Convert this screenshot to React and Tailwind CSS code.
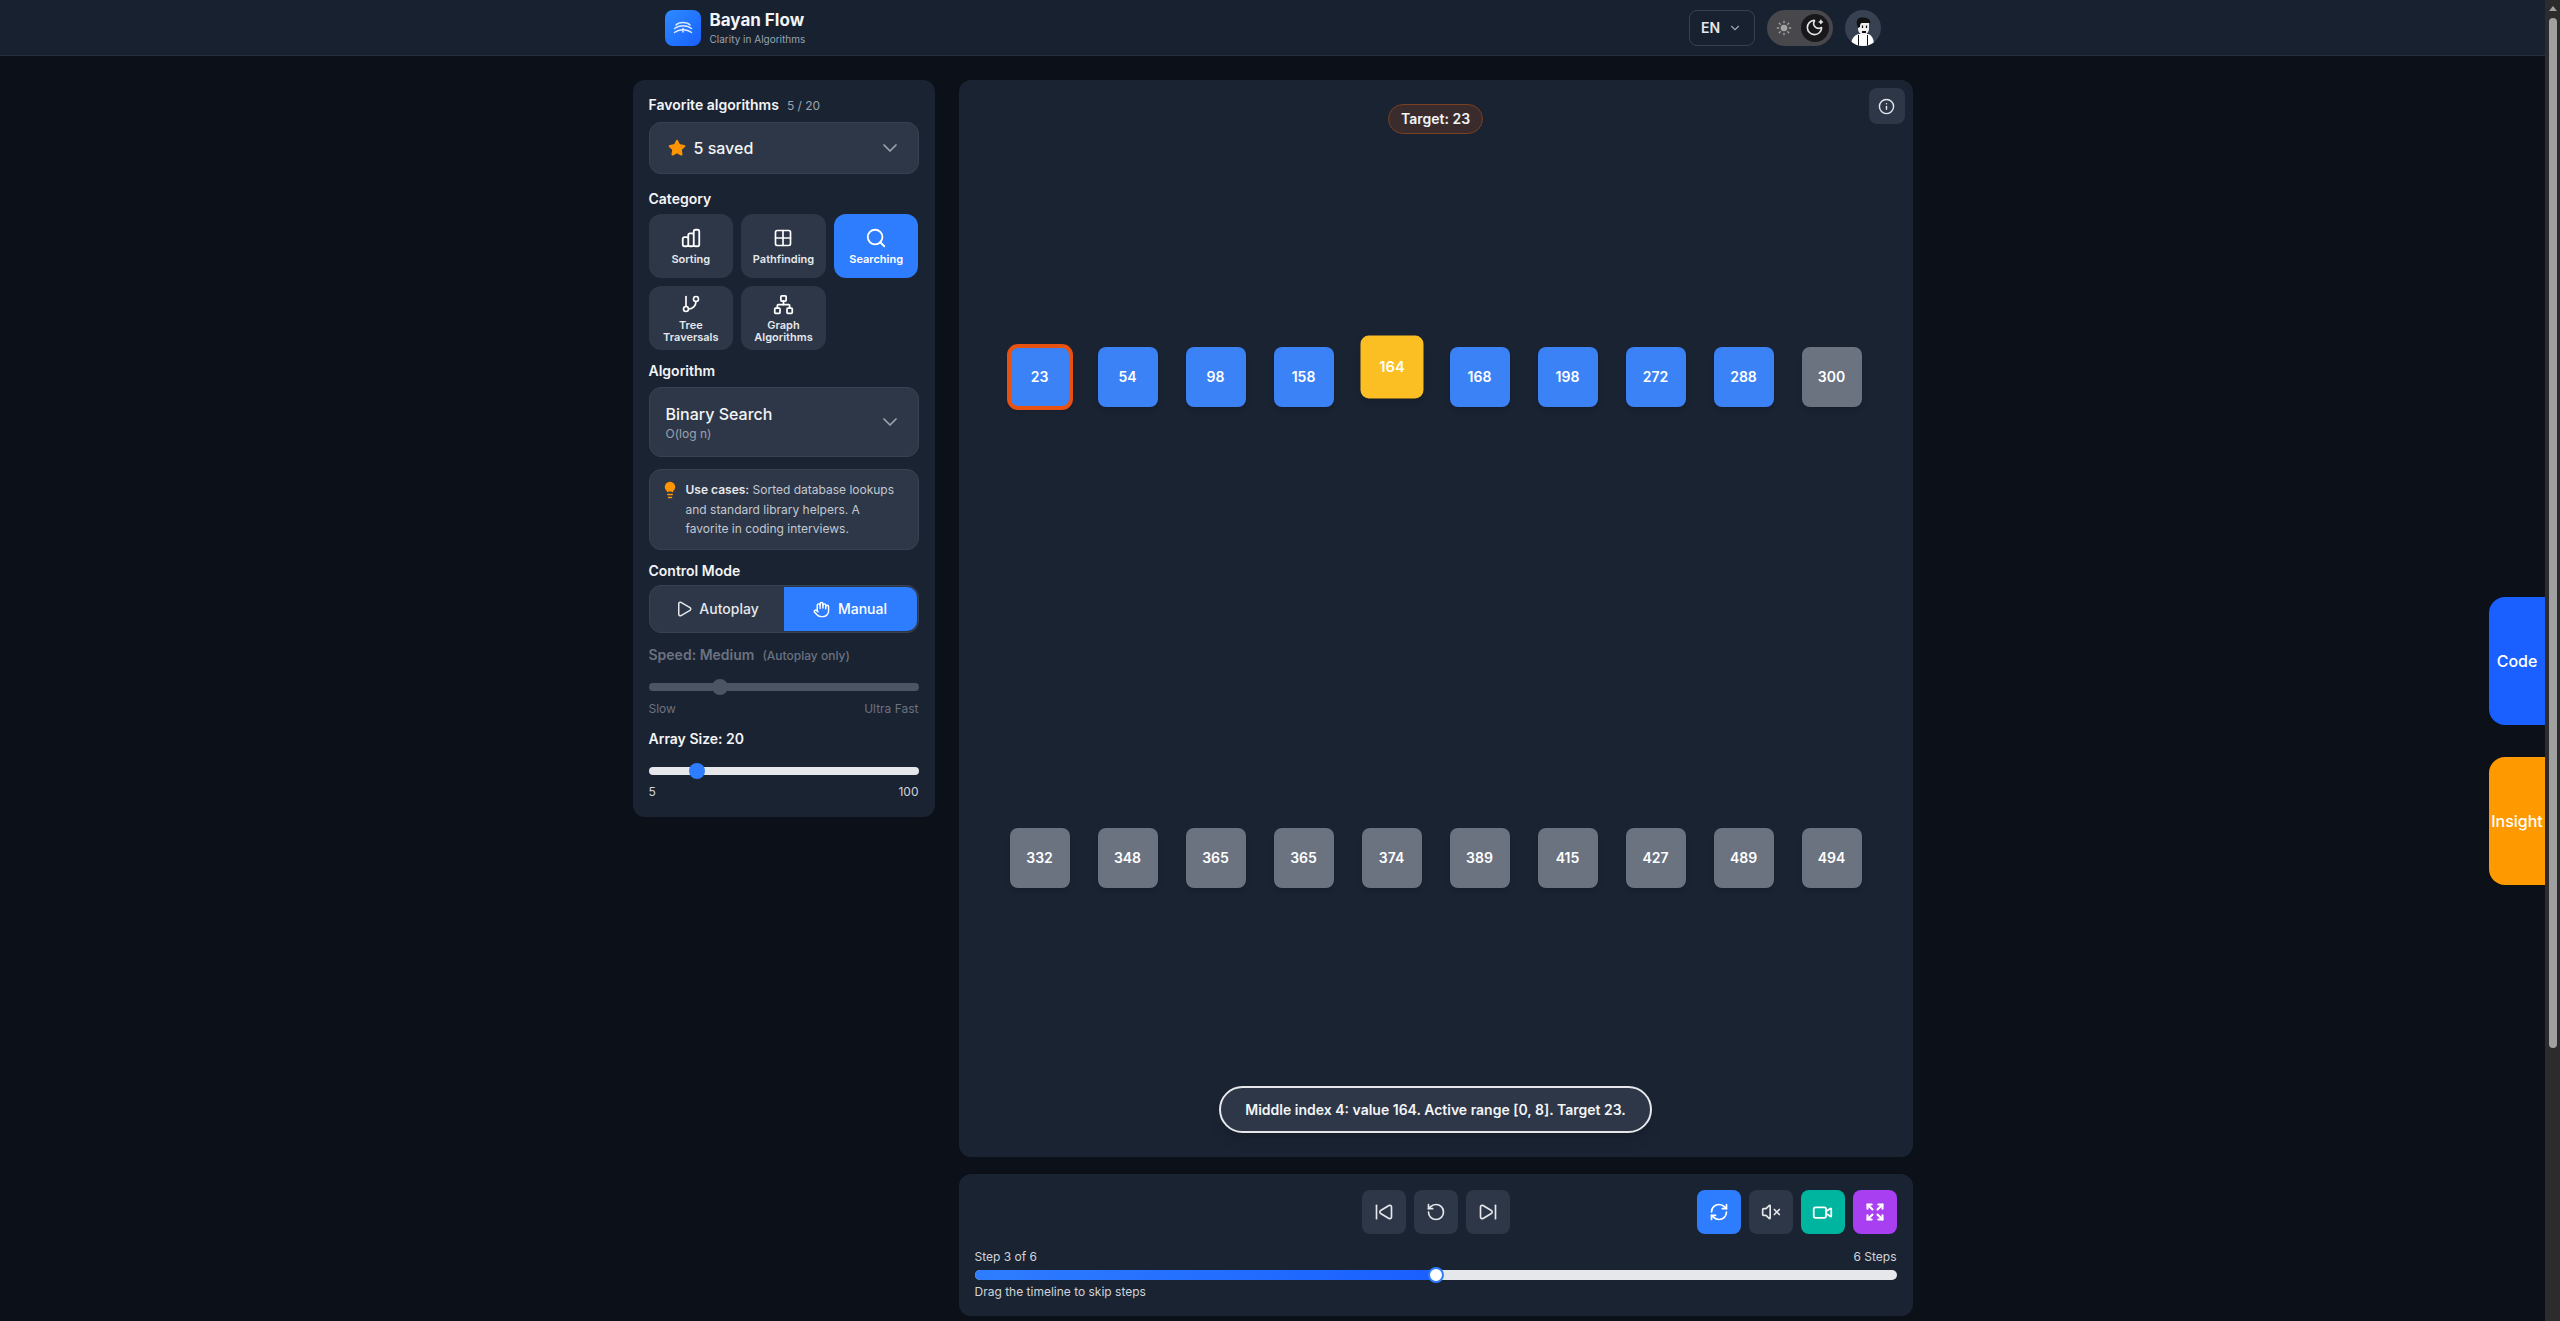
import {
  ChevronDown,
  Expand,
  GitBranch,
  Grid2x2,
  Hand,
  Info,
  Lightbulb,
  MoonStar,
  Network,
  Play,
  RefreshCw,
  RotateCcw,
  Search,
  SkipBack,
  SkipForward,
  Star,
  Sun,
  Video,
  VolumeX,
} from 'lucide-react'
import { HiOutlineChartBar } from 'react-icons/hi'

const row1 = [
  { v: 23, kind: 'target' },
  { v: 54, kind: 'active' },
  { v: 98, kind: 'active' },
  { v: 158, kind: 'active' },
  { v: 164, kind: 'mid' },
  { v: 168, kind: 'active' },
  { v: 198, kind: 'active' },
  { v: 272, kind: 'active' },
  { v: 288, kind: 'active' },
  { v: 300, kind: 'off' },
]
const row2 = [332, 348, 365, 365, 374, 389, 415, 427, 489, 494]

const tileClass = {
  target: 'bg-[#3b82f6] outline-4 -outline-offset-1 outline-[#e8510f]',
  active: 'bg-[#3b82f6]',
  mid: 'bg-[#fbbf24] scale-105 -translate-y-[10px]',
  off: 'bg-[#6b7280]',
}

const Tile = ({ v, kind }) => (
  <div
    className={`w-[60px] h-[60px] rounded-lg flex items-center justify-center text-white text-sm font-semibold shadow-md ${tileClass[kind]}`}
  >
    {v}
  </div>
)

const CatButton = ({ icon, label, active }) => (
  <button
    className={`h-16 rounded-xl flex flex-col items-center justify-center text-[11px] leading-[12px] font-semibold text-center ${
      active ? 'bg-[#2f7dff] text-white' : 'bg-[#2d3748] text-[#e5e7eb]'
    }`}
  >
    <span className="mb-1 h-[22px] flex items-center text-white">{icon}</span>
    {label}
  </button>
)

const CtrlButton = ({ color = 'bg-[#2d3748]', children }) => (
  <button className={`w-11 h-11 rounded-lg flex items-center justify-center text-[#e5e7eb] ${color}`}>
    {children}
  </button>
)

const Logo = () => (
  <div className="w-9 h-9 rounded-lg bg-gradient-to-br from-[#2f8bff] to-[#1a5fff] flex items-center justify-center">
    <svg width="24" height="24" viewBox="0 0 24 24" fill="none" stroke="#dbe8ff" strokeWidth="1.5" strokeLinecap="round">
      <path d="M5 9C8 5.8 16 5.8 19 9" />
      <path d="M3.5 12.5C8 8.8 16 8.8 20.5 12.5" />
      <path d="M3.5 16.5C8 12.8 16 12.8 20.5 16.5" />
      <path d="M12 12.5V16" />
    </svg>
  </div>
)

const Avatar = () => (
  <div className="w-9 h-9 rounded-full bg-[#374151] overflow-hidden">
    <svg width="36" height="36" viewBox="0 0 36 36">
      <path d="M6 36C6 29 9 25 14 24L23 24C27 25 29 29 29 36Z" fill="#fff" />
      <path d="M13.5 25L13.5 36M22.5 25L22.5 36" stroke="#111" strokeWidth="1" />
      <path d="M13 13H24V19C24 22 21 25 18.5 25C16 25 13 22 13 19Z" fill="#f0f0f0" />
      <path d="M12 15C11 10 13 7.5 17 7.5C21 7.5 25.5 8.5 25.5 13L17 13C15.5 13 15 15 15 17L13 18Z" fill="#111" />
      <path d="M17.5 15.5V18M21.5 15.5V18" stroke="#111" strokeWidth="1.3" />
      <path d="M17 21H21V23H17Z" fill="#111" />
    </svg>
  </div>
)

export default function App() {
  return (
    <div className="relative h-[1321px] w-full overflow-hidden flex bg-[#0b1019] text-white font-['Inter',sans-serif]">
      <div className="flex-1 min-w-0 flex flex-col">
        <header className="h-14 bg-[#172130] border-b border-[#263040] shrink-0">
          <div className="max-w-7xl mx-auto px-8 h-full flex items-center justify-between">
            <div className="flex items-center gap-[9px]">
              <Logo />
              <div>
                <div className="text-[17px] leading-[22px] font-bold text-[#f3f4f6]">Bayan Flow</div>
                <div className="mt-[1px] text-[10px] leading-[14px] text-[#9ca3af]">Clarity in Algorithms</div>
              </div>
            </div>
            <div className="flex items-center gap-3">
              <button className="w-[66px] h-9 rounded-lg border border-[#374151] flex items-center justify-center gap-2 text-sm font-semibold text-[#e5e7eb]">
                EN
                <ChevronDown size={14} className="text-[#9ca3af]" />
              </button>
              <div className="w-[66px] h-9 rounded-full bg-[#47474c] flex items-center justify-between pl-[9px] pr-1">
                <Sun size={16} className="text-[#a3a3a3] fill-[#a3a3a3]" />
                <div className="w-7 h-7 rounded-full bg-[#18181b] flex items-center justify-center">
                  <MoonStar size={19} className="text-[#e5e7eb]" />
                </div>
              </div>
              <Avatar />
            </div>
          </div>
        </header>

        <main className="max-w-[1280px] w-full mx-auto mt-6 flex gap-6 items-start">
          <aside className="w-[302px] shrink-0 bg-[#1a2332] rounded-xl px-4 pt-4 pb-[18px]">
            <div className="h-[18px] flex items-baseline gap-2">
              <span className="text-sm font-semibold leading-[18px] text-[#f3f4f6]">Favorite algorithms</span>
              <span className="text-xs text-[#9ca3af]">5 / 20</span>
            </div>
            <button className="mt-[8px] w-full h-[52px] rounded-xl bg-[#2d3748] border border-[#374151] flex items-center justify-between pl-[18px] pr-4">
              <span className="flex items-center gap-2 text-base font-medium text-[#f3f4f6]">
                <Star size={18} className="text-[#ff9500] fill-[#ff9500]" />5 saved
              </span>
              <ChevronDown size={24} strokeWidth={1.75} className="text-[#9ca3af]" />
            </button>

            <div className="mt-4 text-sm font-semibold leading-[18px] text-[#f3f4f6]">Category</div>
            <div className="mt-[6px] grid grid-cols-3 gap-2">
              <CatButton icon={<HiOutlineChartBar size={22} />} label="Sorting" />
              <CatButton icon={<Grid2x2 size={20} />} label="Pathfinding" />
              <CatButton icon={<Search size={22} />} label="Searching" active />
              <CatButton icon={<GitBranch size={20} />} label={<>Tree<br />Traversals</>} />
              <CatButton icon={<Network size={21} />} label={<>Graph<br />Algorithms</>} />
            </div>

            <div className="mt-3 text-sm font-semibold leading-[18px] text-[#f3f4f6]">Algorithm</div>
            <button className="mt-[7px] w-full h-[70px] rounded-xl bg-[#2d3748] border border-[#374151] flex items-center justify-between pl-4 pr-4 text-left">
              <span>
                <span className="block text-base leading-[24px] font-medium text-[#f3f4f6]">Binary Search</span>
                <span className="block text-xs leading-[16px] text-[#9ca3af]">O(log n)</span>
              </span>
              <ChevronDown size={24} strokeWidth={1.75} className="text-[#9ca3af]" />
            </button>

            <div className="mt-3 h-[81px] rounded-xl bg-[#2d3748] border border-[#374151] pl-[11px] pr-4 pt-[10px] flex gap-[7px]">
              <Lightbulb size={18} className="mt-[1px] shrink-0 text-[#ff9500] fill-[#ff9500]" />
              <p className="text-xs leading-[19.5px] text-[#c3c8d0]">
                <span className="font-semibold text-[#e5e7eb]">Use cases:</span> Sorted database lookups and standard library helpers. A favorite in coding interviews.
              </p>
            </div>

            <div className="mt-3 text-sm font-semibold leading-[18px] text-[#f3f4f6]">Control Mode</div>
            <div className="mt-[5px] h-12 rounded-xl bg-[#2d3748] border border-[#374151] p-[1px] flex">
              <div className="w-1/2 flex items-center justify-center gap-[6px] text-sm font-medium text-[#e5e7eb]">
                <Play size={18} />Autoplay
              </div>
              <div className="w-1/2 rounded-r-[10px] bg-[#2f7dff] flex items-center justify-center gap-2 text-sm font-medium text-white">
                <Hand size={17} />Manual
              </div>
            </div>

            <div className="mt-3 h-[20px] flex items-baseline gap-2 text-[#6b7280]">
              <span className="text-sm font-semibold">Speed: Medium</span>
              <span className="text-xs font-medium">(Autoplay only)</span>
            </div>
            <div className="relative mt-[18px] h-2 rounded-full bg-[#4b5563]">
              <div className="absolute left-[63px] -top-1 w-4 h-4 rounded-full bg-[#4b5563]" />
            </div>
            <div className="mt-[11px] flex justify-between text-xs leading-[14px] text-[#6b7280]">
              <span>Slow</span>
              <span>Ultra Fast</span>
            </div>

            <div className="mt-[14px] text-sm font-semibold leading-[18px] text-[#f3f4f6]">Array Size: 20</div>
            <div className="relative mt-[19px] h-2 rounded-full bg-[#e5e7eb]">
              <div className="absolute left-[40px] -top-1 w-4 h-4 rounded-full bg-[#2f7dff]" />
            </div>
            <div className="mt-[10px] flex justify-between text-xs leading-[14px] text-[#d1d5db]">
              <span>5</span>
              <span>100</span>
            </div>
          </aside>

          <section className="flex-1 min-w-0 flex flex-col gap-[17px]">
            <div className="relative h-[1077px] bg-[#1a2332] rounded-xl flex flex-col items-center">
              <div className="mt-[24px] h-[30px] px-3 rounded-full bg-[#3a2c2c] border border-[#7c3f20] flex items-center text-sm font-semibold text-[#f3f4f6]">
                Target: 23
              </div>
              <button className="absolute top-2 right-2 w-9 h-9 rounded-lg bg-[#2d3748] flex items-center justify-center text-[#e5e7eb]">
                <Info size={17} />
              </button>
              <div className="mt-[2px] w-full grid grid-rows-2 h-[962px]">
                <div className="flex items-center justify-center gap-7">
                  {row1.map((t) => (
                    <Tile key={t.v} {...t} />
                  ))}
                </div>
                <div className="flex items-center justify-center gap-7">
                  {row2.map((v, i) => (
                    <Tile key={i} v={v} kind="off" />
                  ))}
                </div>
              </div>
              <div className="absolute bottom-[24px] h-[47px] w-[433px] rounded-full bg-[#2d3748] border-2 border-[#e5e7eb] flex items-center justify-center text-sm font-semibold text-[#f3f4f6] shadow-lg">
                Middle index 4: value 164. Active range [0, 8]. Target 23.
              </div>
            </div>

            <div className="h-[142px] bg-[#1a2332] rounded-xl px-4 pt-4">
              <div className="grid grid-cols-[1fr_auto_1fr]">
                <div />
                <div className="flex gap-2">
                  <CtrlButton><SkipBack size={20} /></CtrlButton>
                  <CtrlButton><RotateCcw size={20} /></CtrlButton>
                  <CtrlButton><SkipForward size={20} /></CtrlButton>
                </div>
                <div className="flex justify-end gap-2">
                  <CtrlButton color="bg-[#2f7dff]"><RefreshCw size={20} className="text-white" /></CtrlButton>
                  <CtrlButton><VolumeX size={20} /></CtrlButton>
                  <CtrlButton color="bg-[#00b5a0]"><Video size={21} className="text-white" /></CtrlButton>
                  <CtrlButton color="bg-[#a83ff0]"><Expand size={20} strokeWidth={2.5} className="text-white" /></CtrlButton>
                </div>
              </div>
              <div className="mt-[15px] flex justify-between text-xs leading-[16px] text-[#d1d5db]">
                <span>Step 3 of 6</span>
                <span>6 Steps</span>
              </div>
              <div className="relative mt-[5px] h-[10px] rounded-full bg-[#e5e7eb]">
                <div className="h-full w-1/2 rounded-l-full bg-gradient-to-r from-[#2f7dff] to-[#1a5fff]" />
                <div className="absolute left-1/2 -ml-2 -top-[3px] w-4 h-4 rounded-full bg-white border-2 border-[#2f7dff]" />
              </div>
              <div className="mt-[4px] text-xs leading-[16px] text-[#d1d5db]">Drag the timeline to skip steps</div>
            </div>
          </section>
        </main>
      </div>

      {/* fake browser scrollbar */}
      <div className="w-[15px] shrink-0 h-full bg-[#2c2c2c] flex flex-col items-center">
        <div className="mt-[6px] w-0 h-0 border-l-[4px] border-r-[4px] border-b-[5px] border-l-transparent border-r-transparent border-b-[#a0a0a0]" />
        <div className="mt-[7px] w-2 h-[1030px] rounded-full bg-[#a0a0a0]" />
      </div>

      <button className="absolute top-[597px] right-[15px] w-14 h-32 rounded-l-2xl bg-[#1a5fff] text-base font-medium text-white">
        Code
      </button>
      <button className="absolute top-[757px] right-[15px] w-14 h-32 rounded-l-2xl bg-[#ff9900] text-base font-medium text-white">
        Insight
      </button>
    </div>
  )
}
